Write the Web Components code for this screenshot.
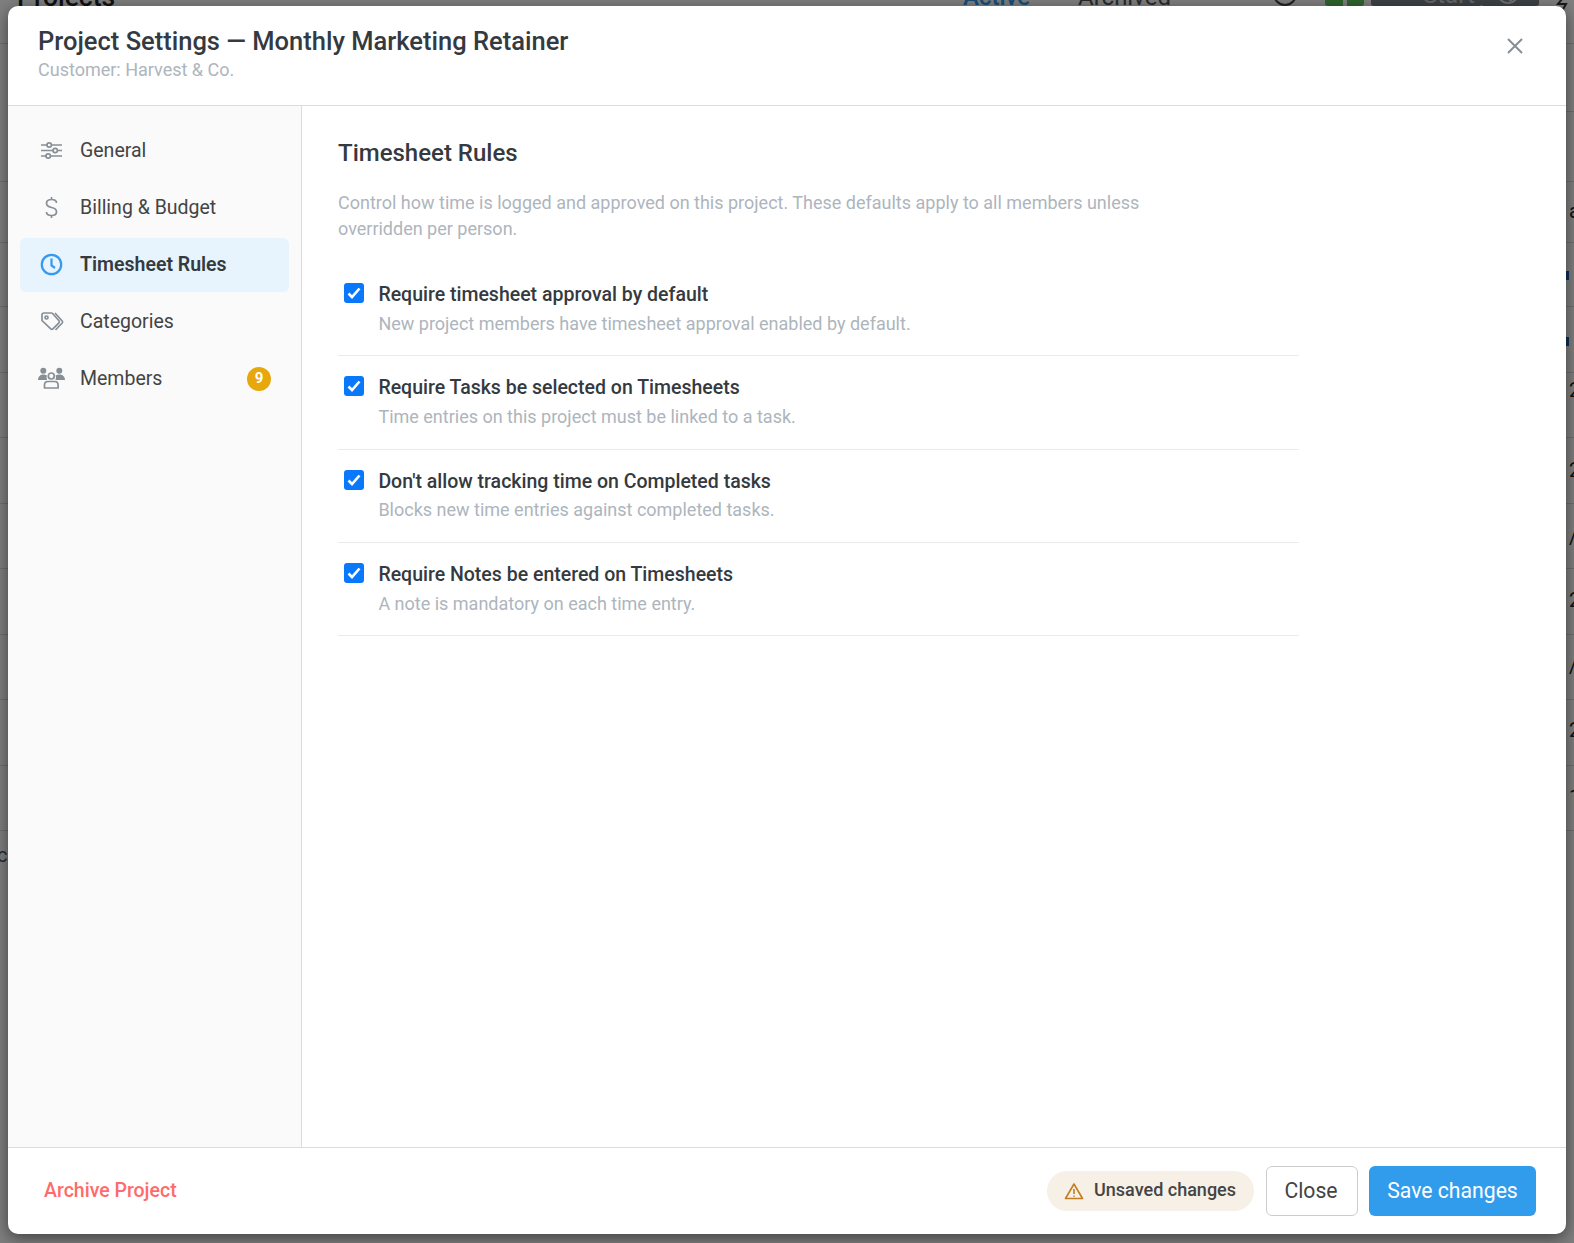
<!DOCTYPE html>
<html>
<head>
<meta charset="utf-8">
<title>Project Settings</title>
<style>
  html, body { margin: 0; height: 100%; }
  body { font-family: Roboto, "Liberation Sans", sans-serif; overflow: hidden; }
</style>
</head>
<body>
<behind-page></behind-page>
<settings-modal>
  <span slot="title">Project Settings — Monthly Marketing Retainer</span>
  <span slot="subtitle">Customer: Harvest &amp; Co.</span>
  <side-item slot="nav" icon="sliders">General</side-item>
  <side-item slot="nav" icon="dollar">Billing &amp; Budget</side-item>
  <side-item slot="nav" icon="clock" active>Timesheet Rules</side-item>
  <side-item slot="nav" icon="tags">Categories</side-item>
  <side-item slot="nav" icon="people" badge="9">Members</side-item>
  <rule-row label="Require timesheet approval by default" hint="New project members have timesheet approval enabled by default."></rule-row>
  <rule-row label="Require Tasks be selected on Timesheets" hint="Time entries on this project must be linked to a task."></rule-row>
  <rule-row label="Don't allow tracking time on Completed tasks" hint="Blocks new time entries against completed tasks."></rule-row>
  <rule-row label="Require Notes be entered on Timesheets" hint="A note is mandatory on each time entry."></rule-row>
</settings-modal>

<script>
// 背景页面 (被遮罩盖住的部分)
class BehindPage extends HTMLElement {
    constructor() {
        super();
        this.attachShadow({ mode: 'open' });
    }

    connectedCallback() {
        const lines = [43, 181, 242, 306, 372, 437, 503, 568, 634, 699, 765, 830];
        const edge = [['a', 197], ['2', 376], ['2', 456], ['/', 523], ['2', 586], ['/', 652], ['2', 716], ['1', 783]];
        this.shadowRoot.innerHTML = `
        <style>
          :host { display: block; position: fixed; inset: 0; background: #fff; overflow: hidden; color: #222; }
          .line { position: absolute; left: 0; right: 0; height: 1px; background: #ddd; }
          .t { position: absolute; font-size: 24px; line-height: 28px; white-space: nowrap; }
          .h1 { left: 17px; top: -21px; font-size: 26.500px; line-height: 36px; font-weight: 500; }
          .tab1 { left: 963px; top: -17px; color: #339af0; font-weight: 500; }
          .tab2 { left: 1078px; top: -17px; color: #555; }
          .btn { position: absolute; top: -20px; height: 26px; border-radius: 3px; }
          .start { left: 1423px; top: -19px; color: #ccc; }
          .edge { left: 1569px; font-size: 20px; color: #222; }
          .blue { position: absolute; left: 1566px; width: 3px; height: 9px; background: #1c5fb0; }
          .ico { position: absolute; overflow: visible; }
          .dim { position: absolute; inset: 0; background: rgba(0, 0, 0, .5); }
        </style>
        <div class="t h1">Projects</div>
        <div class="t tab1">Active</div>
        <div class="t tab2">Archived</div>
        <svg class="ico" style="left:1273px;top:-18px" width="24" height="24" viewBox="0 0 24 24" fill="none" stroke="#444" stroke-width="2"><circle cx="12" cy="12" r="11"/></svg>
        <div class="btn" style="left:1325px;width:39px;background:#5ec95e"></div>
        <div class="btn" style="left:1343px;width:4px;background:#fff;border-radius:0"></div>
        <div class="btn" style="left:1371px;width:111px;background:#78848c"></div>
        <div class="t start">Start</div>
        <div class="btn" style="left:1481px;width:58px;background:#78848c"></div>
        <svg class="ico" style="left:1497px;top:-18px" width="22" height="22" viewBox="0 0 22 22" fill="none" stroke="#ddd" stroke-width="2"><circle cx="11" cy="11" r="10"/><path d="M11 16l4 4"/></svg>
        <svg class="ico" style="left:1556px;top:-2px" width="16" height="14" viewBox="0 0 16 14" fill="none" stroke="#333" stroke-width="2"><path d="M6 1l-4 5h8l-4 7"/></svg>
        ${lines.map(y => `<div class="line" style="top:${y}px"></div>`).join('')}
        <div class="line" style="top:111px;left:50%"></div>
        ${edge.map(e => `<div class="t edge" style="top:${e[1]}px">${e[0]}</div>`).join('')}
        <div class="blue" style="top:271px"></div>
        <div class="blue" style="top:337px"></div>
        <div class="t" style="left:-3px;top:841px;font-size:20px;color:#555">c</div>
        <div class="dim"></div>
      `;
    }
}

// 弹窗外壳
class SettingsModal extends HTMLElement {
    constructor() {
        super();
        this.attachShadow({ mode: 'open' });
    }

    connectedCallback() {
        this.shadowRoot.innerHTML = `
        <style>
          :host {
            display: flex;
            flex-direction: column;
            position: fixed;
            left: 8px;
            top: 6px;
            width: 1558px;
            height: 1228px;
            background: #fff;
            border-radius: 10px;
            overflow: hidden;
            box-shadow: 0 4px 16px rgba(0, 0, 0, .5);
            color: #333;
          }
          header {
            flex: none;
            height: 99px;
            border-bottom: 1px solid #dcdcdc;
            display: flex;
            justify-content: space-between;
            padding: 0 30px;
          }
          .title { font-size: 25.500px; line-height: 32px; font-weight: 500; margin-top: 19px; color: #343a40; }
          .subtitle { font-size: 18px; line-height: 24px; color: #adb5bd; margin-top: 1px; }
          .x { margin: 31px 12px 0 0; width: 18px; height: 18px; }
          .body { flex: 1; display: flex; min-height: 0; }
          nav {
            flex: none;
            width: 294px;
            box-sizing: border-box;
            background: #fafafa;
            border-right: 1px solid #dcdcdc;
            padding: 18px 12px 0;
            display: flex;
            flex-direction: column;
          }
          main { flex: 1; padding: 31px 36px; }
          h2 { margin: 0; font-size: 24px; line-height: 32px; font-weight: 500; color: #343a40; }
          .desc { margin: 21px 0 21px; width: 820px; font-size: 18px; line-height: 26px; color: #adb5bd; }
          .rules { width: 961px; }
          footer {
            flex: none;
            height: 87px;
            box-sizing: border-box;
            border-top: 1px solid #dcdcdc;
            display: flex;
            align-items: center;
            padding: 0 30px 1px 36px;
          }
          .archive { font-size: 19.500px; font-weight: 500; color: #ff6b6b; margin-right: auto; }
          .pill {
            display: flex;
            align-items: center;
            gap: 10px;
            height: 40px;
            padding: 0 18px 0 17px;
            border-radius: 20px;
            background: #f6f0e7;
            font-size: 18px;
            font-weight: 500;
            color: #444;
            margin-right: 12px;
          }
          .pill span { margin-bottom: 2px; }
          .btn {
            box-sizing: border-box;
            height: 50px;
            display: flex;
            align-items: center;
            justify-content: center;
            border-radius: 6px;
            font-size: 21.200px;
          }
          .close { width: 92px; border: 1px solid #ccc; color: #444; margin-right: 11px; padding-right: 2px; }
          .save { width: 167px; background: #329cec; color: #fff; }
        </style>
        <header>
          <div>
            <div class="title"><slot name="title"></slot></div>
            <div class="subtitle"><slot name="subtitle"></slot></div>
          </div>
          <svg class="x" viewBox="0 0 18 18" fill="none" stroke="#868e96" stroke-width="2"><path d="M2 2l14 14M16 2L2 16"/></svg>
        </header>
        <div class="body">
          <nav><slot name="nav"></slot></nav>
          <main>
            <h2>Timesheet Rules</h2>
            <p class="desc">Control how time is logged and approved on this project. These defaults apply to all members unless overridden per person.</p>
            <div class="rules"><slot></slot></div>
          </main>
        </div>
        <footer>
          <span class="archive">Archive Project</span>
          <span class="pill">
            <svg width="20" height="18" viewBox="0 0 20 18" fill="none" stroke="#c27d23" stroke-width="1.6"><path d="M10 2L1.5 16.5h17z" stroke-linejoin="round"/><path d="M10 7v5M10 13.4v1.4"/></svg>
            <span>Unsaved changes</span>
          </span>
          <span class="btn close">Close</span>
          <span class="btn save">Save changes</span>
        </footer>
      `;
    }
}

// 侧边栏菜单项
class SideItem extends HTMLElement {
    constructor() {
        super();
        this.attachShadow({ mode: 'open' });
        this.icons = {
            sliders: '<path d="M3 6h6M13.400 6H24M3 11.500h12M19.400 11.500H24M3 17h5M12.400 17H24"/><circle cx="11.200" cy="6" r="2.200"/><circle cx="17.200" cy="11.500" r="2.200"/><circle cx="10.200" cy="17" r="2.200"/>',
            dollar: '<path d="M13.500 1v2.500M13.500 19.500V22M18.500 7c0-2-2-3.500-5-3.500s-5 1.500-5 3.800c0 2.700 2.500 3.700 5 4.200s5 1.500 5 4.200c0 2.300-2 3.800-5 3.800s-5-1.500-5-3.500"/>',
            clock: '<circle cx="13.500" cy="11.500" r="9.700"/><path d="M13.500 5.500v7l3.500 2.500"/>',
            tags: '<path d="M6 3h7.500a1.500 1.500 0 0 1 1.100.5l6.400 7.300a1.500 1.500 0 0 1-.1 2l-6 6.100a1.500 1.500 0 0 1-2.100 0L4.500 11a1.500 1.500 0 0 1-.5-1.100V5a2 2 0 0 1 2-2z"/><circle cx="8.500" cy="7.500" r="1.500"/><path d="M17 3l7.200 8a1.500 1.500 0 0 1 0 2L17.500 20"/>',
            people: `<g fill="#868e96" stroke="none">
                <circle cx="5.300" cy="3.700" r="3"/><circle cx="21.300" cy="3.700" r="3"/>
                <path d="M0 13c0-3.500 2.500-5.500 5.300-5.500 1.500 0 2.700.4 3.700 1.100-.6 1.300-.5 3 .2 4.400zM27 13c0-3.500-2.500-5.500-5.700-5.500-1.500 0-2.700.4-3.700 1.100.6 1.300.5 3-.2 4.400z"/>
              </g>
              <circle cx="13.300" cy="9" r="3"/>
              <path d="M6.500 21v-3c0-2 1.500-3.500 3.500-3.500h6.600c2 0 3.500 1.500 3.500 3.500v3z" stroke-linejoin="round"/>`
        };
    }

    connectedCallback() {
        const active = this.hasAttribute('active');
        const badge = this.getAttribute('badge');
        const icon = this.getAttribute('icon');
        this.shadowRoot.innerHTML = `
        <style>
          :host {
            display: flex;
            align-items: center;
            height: 54px;
            margin-bottom: 3px;
            padding: 0 18px;
            border-radius: 6px;
            font-size: 19.500px;
            color: #444;
            ${active ? 'background: #e7f3fd; font-weight: 600; color: #343a40;' : ''}
          }
          svg { flex: none; width: 26px; height: 24px; margin-right: 16px; overflow: visible; fill: none; stroke: ${active ? '#339af0' : '#868e96'}; stroke-width: ${active ? 2.200 : 1.700}; }
          .label { flex: 1; margin-bottom: 2px; }
          .badge {
            width: 24px;
            height: 24px;
            border-radius: 50%;
            background: #e6a80c;
            color: #fff;
            font: 700 15px/23px Roboto, sans-serif;
            text-align: center;
          }
        </style>
        <svg viewBox="0 0 26 24">${this.icons[icon]}</svg>
        <span class="label"><slot></slot></span>
        ${badge ? `<span class="badge">${badge}</span>` : ''}
      `;
    }
}

// 规则复选框行
class RuleRow extends HTMLElement {
    constructor() {
        super();
        this.attachShadow({ mode: 'open' });
    }

    connectedCallback() {
        this.shadowRoot.innerHTML = `
        <style>
          :host {
            display: flex;
            box-sizing: border-box;
            height: 93.330px;
            padding-top: 18px;
            border-bottom: 1px solid #e9ecef;
          }
          .check {
            flex: none;
            width: 20px;
            height: 20px;
            margin: 2px 14.400px 0 6px;
            border-radius: 3px;
            background: #0a78fb;
            display: flex;
            align-items: center;
            justify-content: center;
          }
          .label { font-size: 19.500px; line-height: 26px; font-weight: 500; color: #343a40; margin-top: 1px; }
          .hint { font-size: 18px; line-height: 26px; color: #adb5bd; margin-top: 2.600px; }
        </style>
        <span class="check"><svg width="14" height="12" viewBox="0 0 14 12" fill="none" stroke="#fff" stroke-width="2.600"><path d="M1.500 6.500l3.500 3.500 7.500-8.500"/></svg></span>
        <div>
          <div class="label">${this.getAttribute('label')}</div>
          <div class="hint">${this.getAttribute('hint')}</div>
        </div>
      `;
    }
}

customElements.define('behind-page', BehindPage);
customElements.define('settings-modal', SettingsModal);
customElements.define('side-item', SideItem);
customElements.define('rule-row', RuleRow);
</script>
</body>
</html>
